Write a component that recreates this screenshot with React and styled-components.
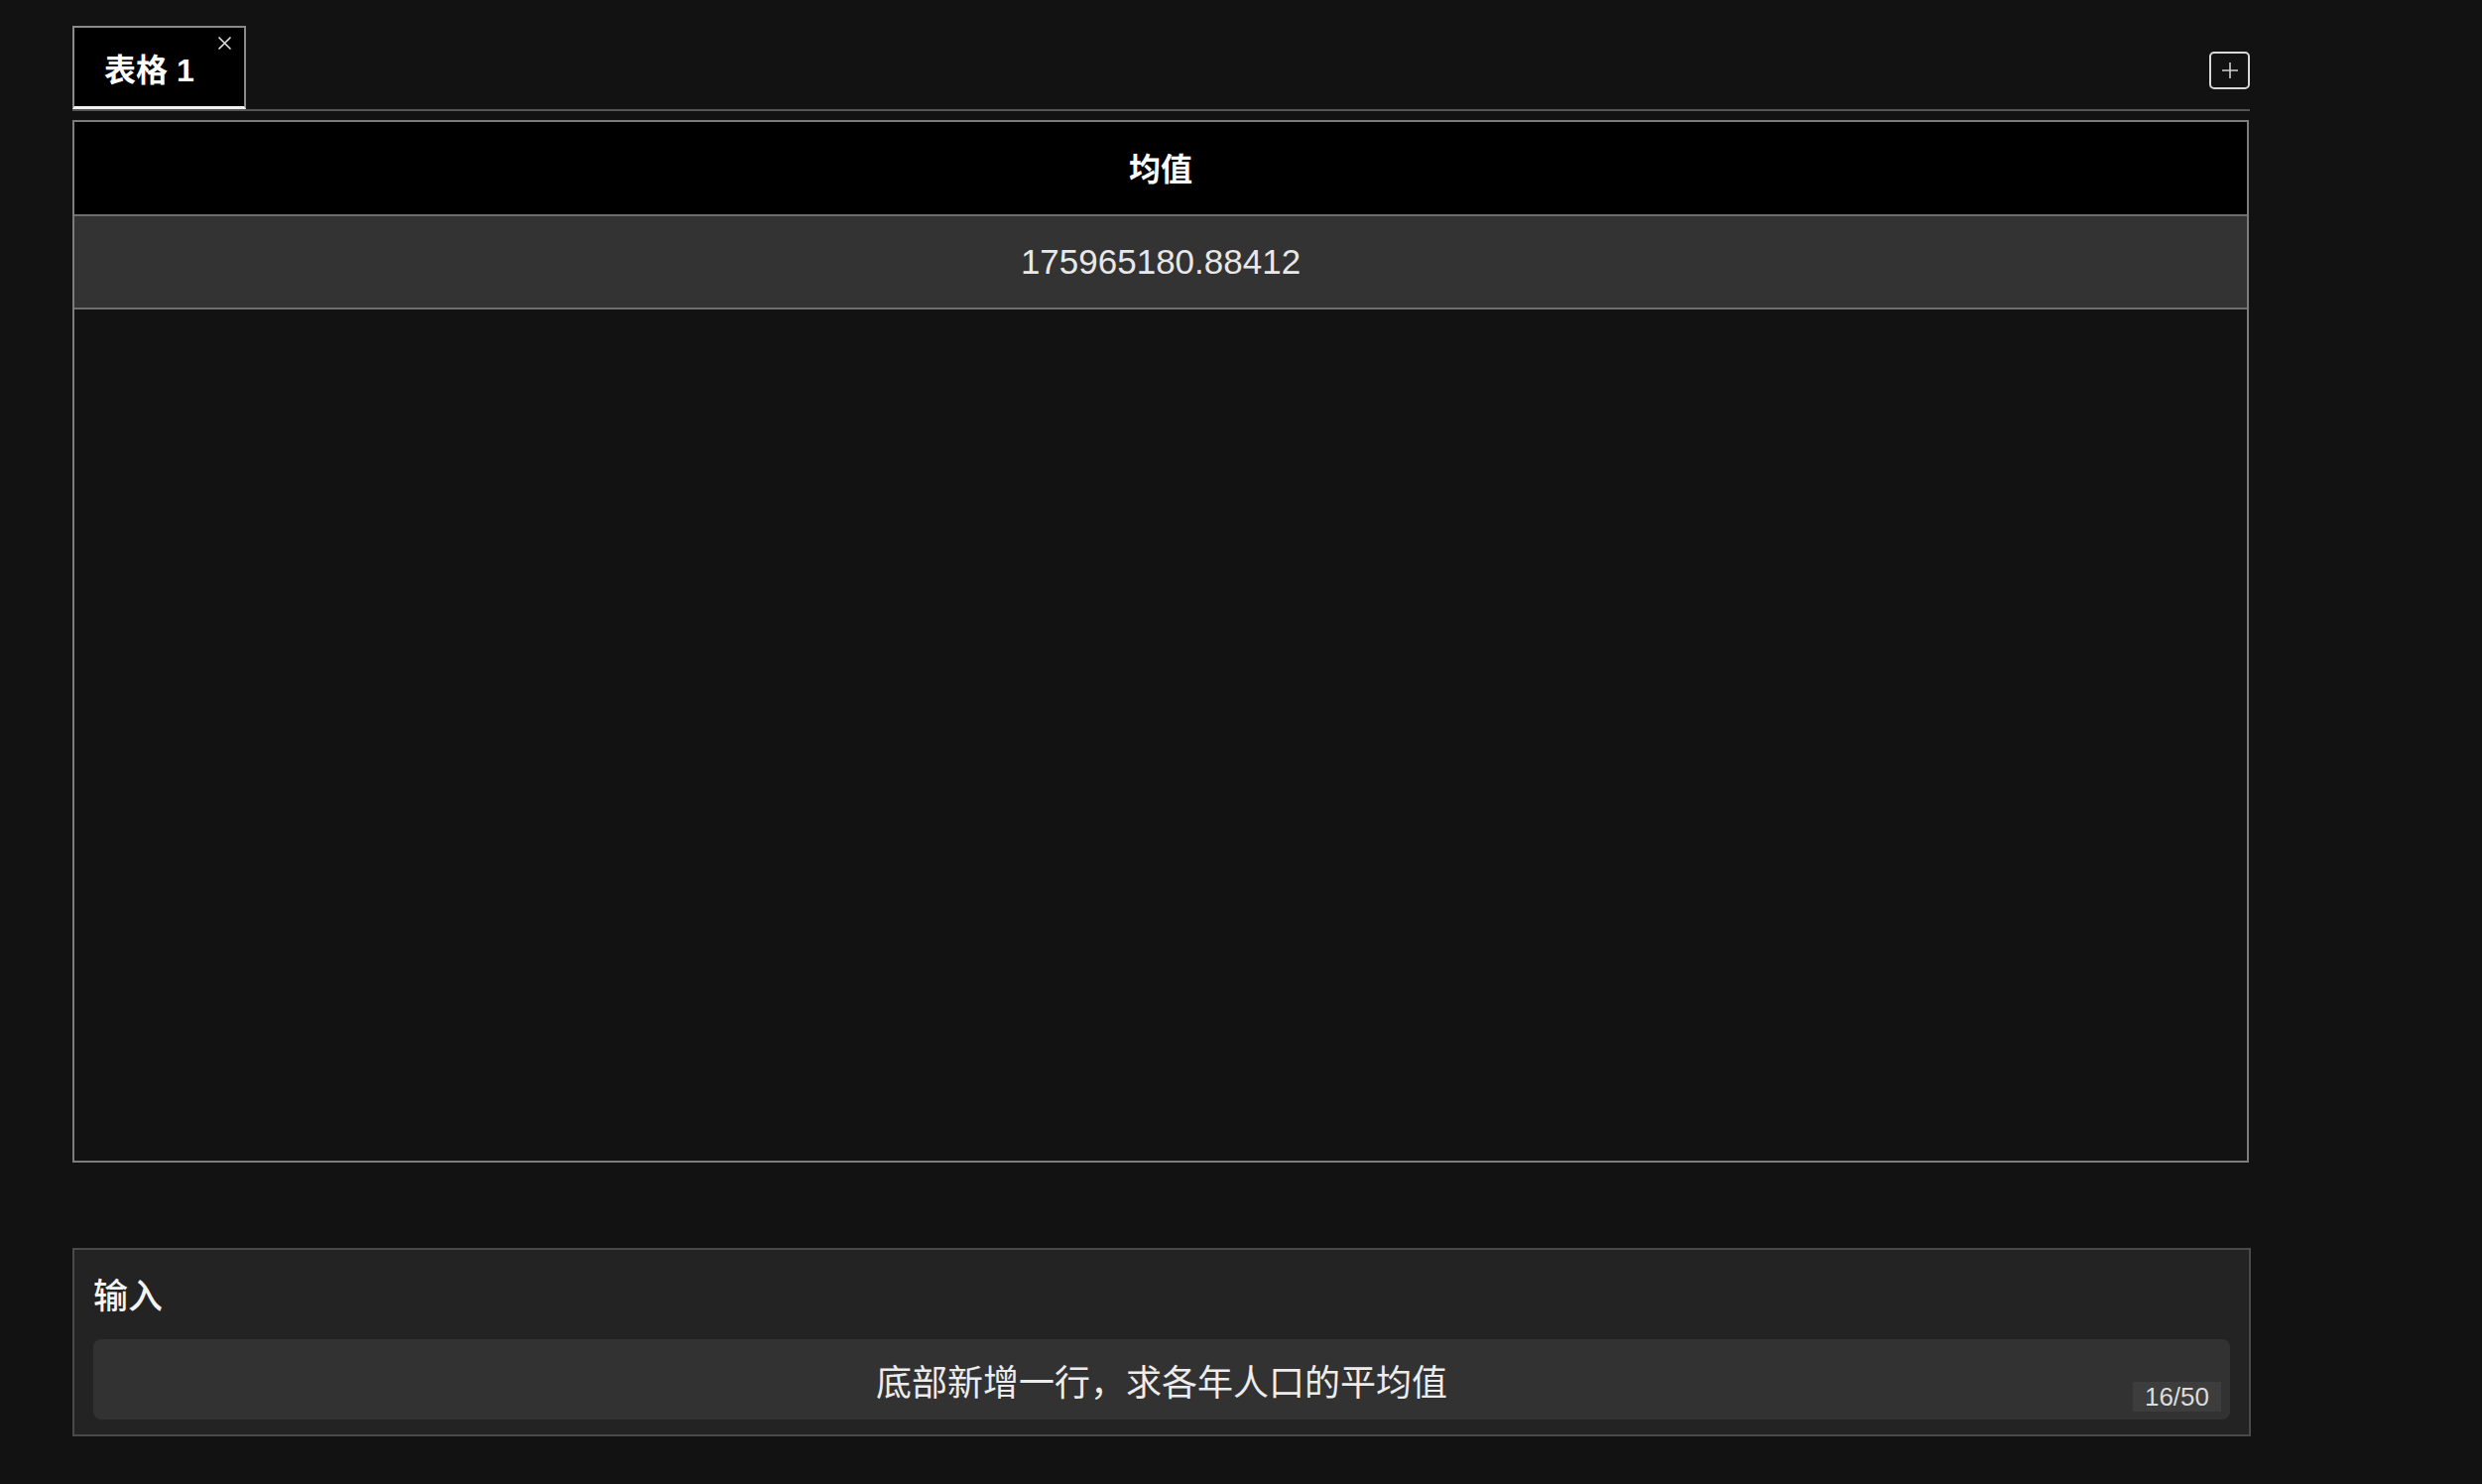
import React from "react";
import styled, { createGlobalStyle } from "styled-components";

const GlobalStyle = createGlobalStyle`
  html, body {
    margin: 0;
    padding: 0;
    background: #121212;
  }
  body {
    font-family: "Liberation Sans", "Noto Sans CJK SC", sans-serif;
    color: #fff;
  }
  * {
    box-sizing: border-box;
  }
`;

const Page = styled.div`
  width: 2268px;
  padding: 26px 0 40px 73px;
  display: flex;
  flex-direction: column;
`;

const TabBar = styled.div`
  display: flex;
  align-items: center;
  border-bottom: 2px solid #555;
  height: 86px;
`;

const Tab = styled.div`
  position: relative;
  align-self: flex-end;
  height: 84px;
  padding: 0 30px 0 30px;
  display: flex;
  align-items: center;
  background: #000;
  border: 2px solid #8a8a8a;
  border-bottom: 3px solid #f2f2f2;
  font-size: 32px;
  font-weight: 700;
  color: #fff;
`;

const TabTitle = styled.span`
  padding-right: 20px;
  white-space: pre;
`;

const CloseBtn = styled.span`
  position: absolute;
  top: 8px;
  right: 12px;
  width: 15px;
  height: 15px;
  display: flex;
`;

const PlusButton = styled.div`
  margin-left: auto;
  margin-top: 6px;
  width: 41px;
  height: 38px;
  border: 2px solid #d8d8d8;
  border-radius: 5px;
  display: flex;
  align-items: center;
  justify-content: center;
`;

const Table = styled.div`
  margin-top: 9px;
  width: 2194px;
  height: 1051px;
  border: 2px solid #7c7c7c;
  background: #121212;
  display: flex;
  flex-direction: column;
`;

const Row = styled.div`
  height: ${(p) => p.$h}px;
  display: flex;
  align-items: center;
  justify-content: center;
  padding-bottom: ${(p) => (p.$head ? 4 : 0)}px;
  background: ${(p) => (p.$head ? "#000" : "#333")};
  border-bottom: 2px solid #6f6f6f;
  color: ${(p) => (p.$head ? "#fff" : "#e8e8e8")};
  font-size: ${(p) => (p.$head ? 32 : 35)}px;
  font-weight: ${(p) => (p.$head ? 700 : 400)};
`;

const InputPanel = styled.div`
  margin-top: 86px;
  width: 2196px;
  background: #232323;
  border: 2px solid #4a4a4a;
  padding: 26px 19px 15px 19px;
  display: flex;
  flex-direction: column;
  gap: 22px;
`;

const Label = styled.div`
  font-size: 35px;
  line-height: 42px;
  font-weight: 500;
  color: #f4f4f4;
`;

const InputBox = styled.div`
  position: relative;
  height: 81px;
  background: #323232;
  border-radius: 8px;
  display: flex;
  align-items: center;
  justify-content: center;
  font-size: 36px;
  color: #ececec;
`;

const Counter = styled.span`
  position: absolute;
  right: 9px;
  bottom: 8px;
  height: 30px;
  padding: 0 12px;
  display: flex;
  align-items: center;
  background: #3d3d3d;
  font-size: 26px;
  color: #dcdcdc;
`;

export default function App() {
  return (
    <>
      <GlobalStyle />
      <Page>
        <TabBar>
          <Tab>
            <TabTitle>表格 1</TabTitle>
            <CloseBtn>
              <svg width="15" height="15" viewBox="0 0 15 15">
                <path d="M1.5 1.5 L13.5 13.5 M13.5 1.5 L1.5 13.5" stroke="#e0e0e0" strokeWidth="1.6" />
              </svg>
            </CloseBtn>
          </Tab>
          <PlusButton>
            <svg width="18" height="18" viewBox="0 0 18 18">
              <path d="M9 1 V17 M1 9 H17" stroke="#cfcfcf" strokeWidth="1.6" />
            </svg>
          </PlusButton>
        </TabBar>
        <Table>
          <Row $head $h={95}>均值</Row>
          <Row $h={94}>175965180.88412</Row>
        </Table>
        <InputPanel>
          <Label>输入</Label>
          <InputBox>
            底部新增一行，求各年人口的平均值
            <Counter>16/50</Counter>
          </InputBox>
        </InputPanel>
      </Page>
    </>
  );
}
